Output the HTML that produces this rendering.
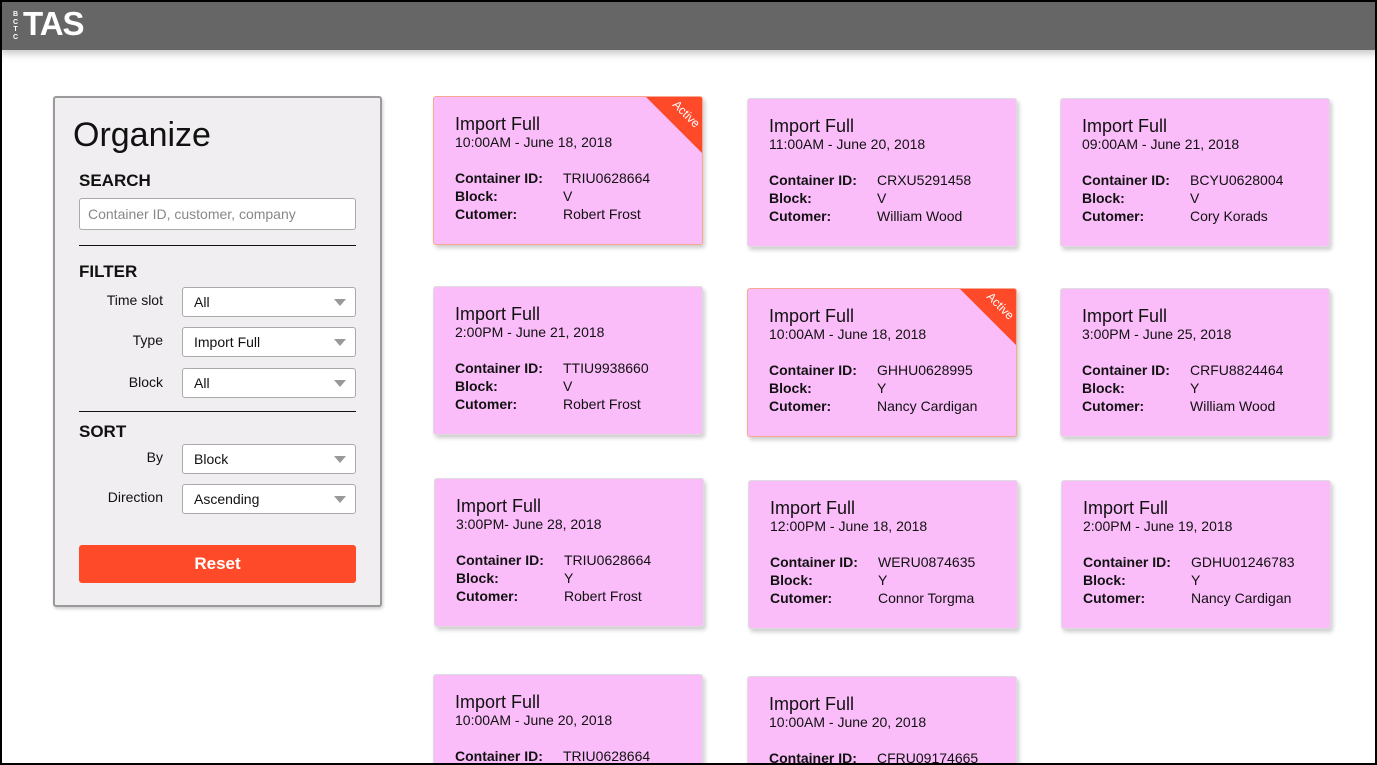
<!DOCTYPE html>
<html><head><meta charset="utf-8"><style>
*{box-sizing:border-box;margin:0;padding:0}
html{width:1377px;height:765px;overflow:hidden}
body{width:1377px;height:765px;overflow:hidden;background:#fff;font-family:"Liberation Sans",sans-serif;position:relative;color:#111}
.frame{position:absolute;left:0;top:0;width:1377px;height:765px;border:2px solid #000;pointer-events:none;z-index:10}
.hdr{position:absolute;left:0;top:0;width:1377px;height:50px;background:#666;box-shadow:0 3px 8px rgba(0,0,0,.25)}
.bctc{position:absolute;left:12px;top:11px;font-size:7px;line-height:7.5px;color:#fff;font-weight:bold;width:7px;text-align:center}
.tas{position:absolute;left:23px;top:5px;font-size:33px;font-weight:bold;color:#fff;letter-spacing:-1px}
.side{position:absolute;left:53px;top:96px;width:329px;height:511px;background:#f0eef0;border:2px solid #9a9a9a;border-radius:3px;box-shadow:1px 2px 3px rgba(0,0,0,.2)}
.t{position:absolute;white-space:nowrap}
.h1{font-size:34px;left:18px;top:18px;color:#111}
.sec{font-size:17px;font-weight:bold;left:24px}
.inp{position:absolute;left:24px;width:277px;height:32px;background:#fff;border:1px solid #aaa;border-radius:3px;font-size:14px;color:#888;padding:7px 8px}
.line{position:absolute;left:24px;width:277px;height:1px;background:#111}
.lbl{font-size:14px;right:217px;text-align:right}
.sel{position:absolute;left:127px;width:174px;height:30px;background:#fff;border:1px solid #aaa;border-radius:3px;font-size:14px;padding:6px 11px;color:#111}
.sel:after{content:"";position:absolute;right:9px;top:11px;border-left:6px solid transparent;border-right:6px solid transparent;border-top:7px solid #999}
.btn{position:absolute;left:24px;top:447px;width:277px;height:38px;background:#ff4a2a;border-radius:3px;color:#fff;font-size:17px;font-weight:bold;text-align:center;line-height:38px}
.card{position:absolute;width:270px;height:149px;background:#fbbdfa;border:1px solid #ddd;border-radius:3px;box-shadow:2px 3px 4px rgba(0,0,0,.2);overflow:hidden}
.card.act{border-color:#f6a890}
.card .ti{position:absolute;left:21px;top:17px;font-size:18px}
.card .tm{position:absolute;left:21px;top:37px;font-size:14px}
.card .k{position:absolute;left:21px;font-size:14px;line-height:18px;top:72px;font-weight:bold}
.card .v{position:absolute;left:129px;font-size:14px;line-height:18px;top:72px}
.rib{position:absolute;right:0;top:0;width:0;height:0;border-top:56px solid #ff4a2a;border-left:56px solid transparent}
.rib span{position:absolute;color:#fff;font-size:12px;transform:rotate(45deg);left:-32px;top:-46px}
</style></head><body>
<div class="hdr"><div class="bctc">B<br>C<br>T<br>C</div><div class="tas">TAS</div></div>
<div class="side">
<div class="t h1">Organize</div>
<div class="t sec" style="top:73px">SEARCH</div>
<div class="inp" style="top:100px">Container ID, customer, company</div>
<div class="line" style="top:147px"></div>
<div class="t sec" style="top:164px">FILTER</div>
<div class="t lbl" style="top:194px">Time slot</div><div class="sel" style="top:189px">All</div>
<div class="t lbl" style="top:234px">Type</div><div class="sel" style="top:229px">Import Full</div>
<div class="t lbl" style="top:276px">Block</div><div class="sel" style="top:270px">All</div>
<div class="line" style="top:313px"></div>
<div class="t sec" style="top:324px">SORT</div>
<div class="t lbl" style="top:351px">By</div><div class="sel" style="top:346px">Block</div>
<div class="t lbl" style="top:391px">Direction</div><div class="sel" style="top:386px">Ascending</div>
<div class="btn">Reset</div>
</div>

<div class="card act" style="left:433px;top:96px"><div class="ti">Import Full</div><div class="tm">10:00AM - June 18, 2018</div><div class="k">Container ID:<br>Block:<br>Cutomer:</div><div class="v">TRIU0628664<br>V<br>Robert Frost</div><div class="rib"><span>Active</span></div></div>
<div class="card" style="left:747px;top:98px"><div class="ti">Import Full</div><div class="tm">11:00AM - June 20, 2018</div><div class="k">Container ID:<br>Block:<br>Cutomer:</div><div class="v">CRXU5291458<br>V<br>William Wood</div></div>
<div class="card" style="left:1060px;top:98px"><div class="ti">Import Full</div><div class="tm">09:00AM - June 21, 2018</div><div class="k">Container ID:<br>Block:<br>Cutomer:</div><div class="v">BCYU0628004<br>V<br>Cory Korads</div></div>

<div class="card" style="left:433px;top:286px"><div class="ti">Import Full</div><div class="tm">2:00PM - June 21, 2018</div><div class="k">Container ID:<br>Block:<br>Cutomer:</div><div class="v">TTIU9938660<br>V<br>Robert Frost</div></div>
<div class="card act" style="left:747px;top:288px"><div class="ti">Import Full</div><div class="tm">10:00AM - June 18, 2018</div><div class="k">Container ID:<br>Block:<br>Cutomer:</div><div class="v">GHHU0628995<br>Y<br>Nancy Cardigan</div><div class="rib"><span>Active</span></div></div>
<div class="card" style="left:1060px;top:288px"><div class="ti">Import Full</div><div class="tm">3:00PM - June 25, 2018</div><div class="k">Container ID:<br>Block:<br>Cutomer:</div><div class="v">CRFU8824464<br>Y<br>William Wood</div></div>

<div class="card" style="left:434px;top:478px"><div class="ti">Import Full</div><div class="tm">3:00PM- June 28, 2018</div><div class="k">Container ID:<br>Block:<br>Cutomer:</div><div class="v">TRIU0628664<br>Y<br>Robert Frost</div></div>
<div class="card" style="left:748px;top:480px"><div class="ti">Import Full</div><div class="tm">12:00PM - June 18, 2018</div><div class="k">Container ID:<br>Block:<br>Cutomer:</div><div class="v">WERU0874635<br>Y<br>Connor Torgma</div></div>
<div class="card" style="left:1061px;top:480px"><div class="ti">Import Full</div><div class="tm">2:00PM - June 19, 2018</div><div class="k">Container ID:<br>Block:<br>Cutomer:</div><div class="v">GDHU01246783<br>Y<br>Nancy Cardigan</div></div>

<div class="card" style="left:433px;top:674px;height:91px;border-bottom:none;border-radius:3px 3px 0 0"><div class="ti">Import Full</div><div class="tm">10:00AM - June 20, 2018</div><div class="k">Container ID:</div><div class="v">TRIU0628664</div></div>
<div class="card" style="left:747px;top:676px;height:89px;border-bottom:none;border-radius:3px 3px 0 0"><div class="ti">Import Full</div><div class="tm">10:00AM - June 20, 2018</div><div class="k">Container ID:</div><div class="v">CFRU09174665</div></div>

<div class="frame"></div>
</body></html>
